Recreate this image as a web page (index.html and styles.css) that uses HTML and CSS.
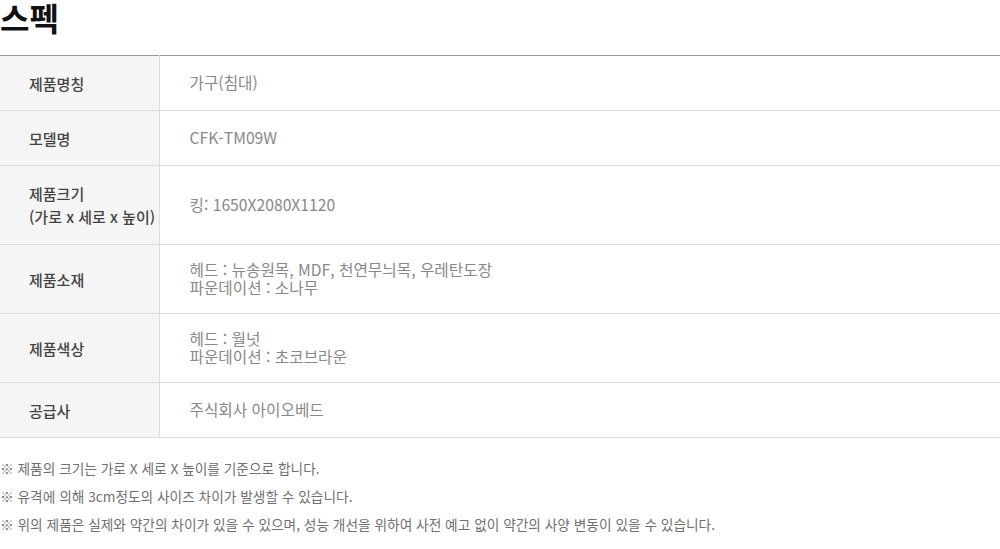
FILE: index.html
```html
<!DOCTYPE html>
<html lang="ko">
<head>
<meta charset="utf-8">
<link rel="stylesheet" href="styles.css">
</head>
<body>
<div class="spec">
  <h2 class="title">스펙</h2>
  <table class="spec-table">
    <colgroup><col class="col-head"><col></colgroup>
    <tr class="r55"><th>제품명칭</th><td>가구(침대)</td></tr>
    <tr class="r55"><th>모델명</th><td>CFK-TM09W</td></tr>
    <tr class="r79"><th class="two">제품크기<br>(가로 x 세로 x 높이)</th><td>킹: 1650X2080X1120</td></tr>
    <tr class="r69"><th>제품소재</th><td class="multi">헤드 : 뉴송원목, MDF, 천연무늬목, 우레탄도장<br>파운데이션 : 소나무</td></tr>
    <tr class="r69"><th>제품색상</th><td class="multi">헤드 : 월넛<br>파운데이션 : 초코브라운</td></tr>
    <tr class="r55"><th>공급사</th><td>주식회사 아이오베드</td></tr>
  </table>
  <ul class="notes">
    <li>※ 제품의 크기는 가로 X 세로 X 높이를 기준으로 합니다.</li>
    <li>※ 유격에 의해 3cm정도의 사이즈 차이가 발생할 수 있습니다.</li>
    <li>※ 위의 제품은 실제와 약간의 차이가 있을 수 있으며, 성능 개선을 위하여 사전 예고 없이 약간의 사양 변동이 있을 수 있습니다.</li>
  </ul>
</div>
</body>
</html>
```
FILE: styles.css
```css
html, body {
  margin: 0;
  padding: 0;
  background: #fff;
}
body {
  font-family: "Noto Sans CJK KR", "Noto Sans", sans-serif;
  width: 1000px;
}
.title {
  margin: 0;
  font-size: 32px;
  line-height: 34px;
  font-weight: 700;
  color: #111;
  height: 55px;
}
.spec-table {
  width: 1000px;
  table-layout: fixed;
  border-collapse: collapse;
  border-top: 1px solid #999;
}
.col-head { width: 159px; }
.spec-table th,
.spec-table td {
  border-bottom: 1px solid #ddd;
  padding: 0;
  vertical-align: middle;
  text-align: left;
}
.spec-table th {
  padding-left: 29px;
  background: #f5f5f5;
  border-right: 1px solid #ddd;
  color: #444;
  font-weight: 500;
  font-size: 15px;
  line-height: 23px;
  white-space: nowrap;
}
.spec-table td {
  padding-left: 30px;
  color: #888;
  font-size: 15.7px;
  line-height: 18px;
}
.r55 { height: 55px; }
.r79 { height: 79px; }
.r69 { height: 69px; }
.notes {
  list-style: none;
  margin: 16px 0 0;
  padding: 0;
  font-size: 13.7px;
  color: #707070;
}
.notes li {
  line-height: 28px;
}
```
